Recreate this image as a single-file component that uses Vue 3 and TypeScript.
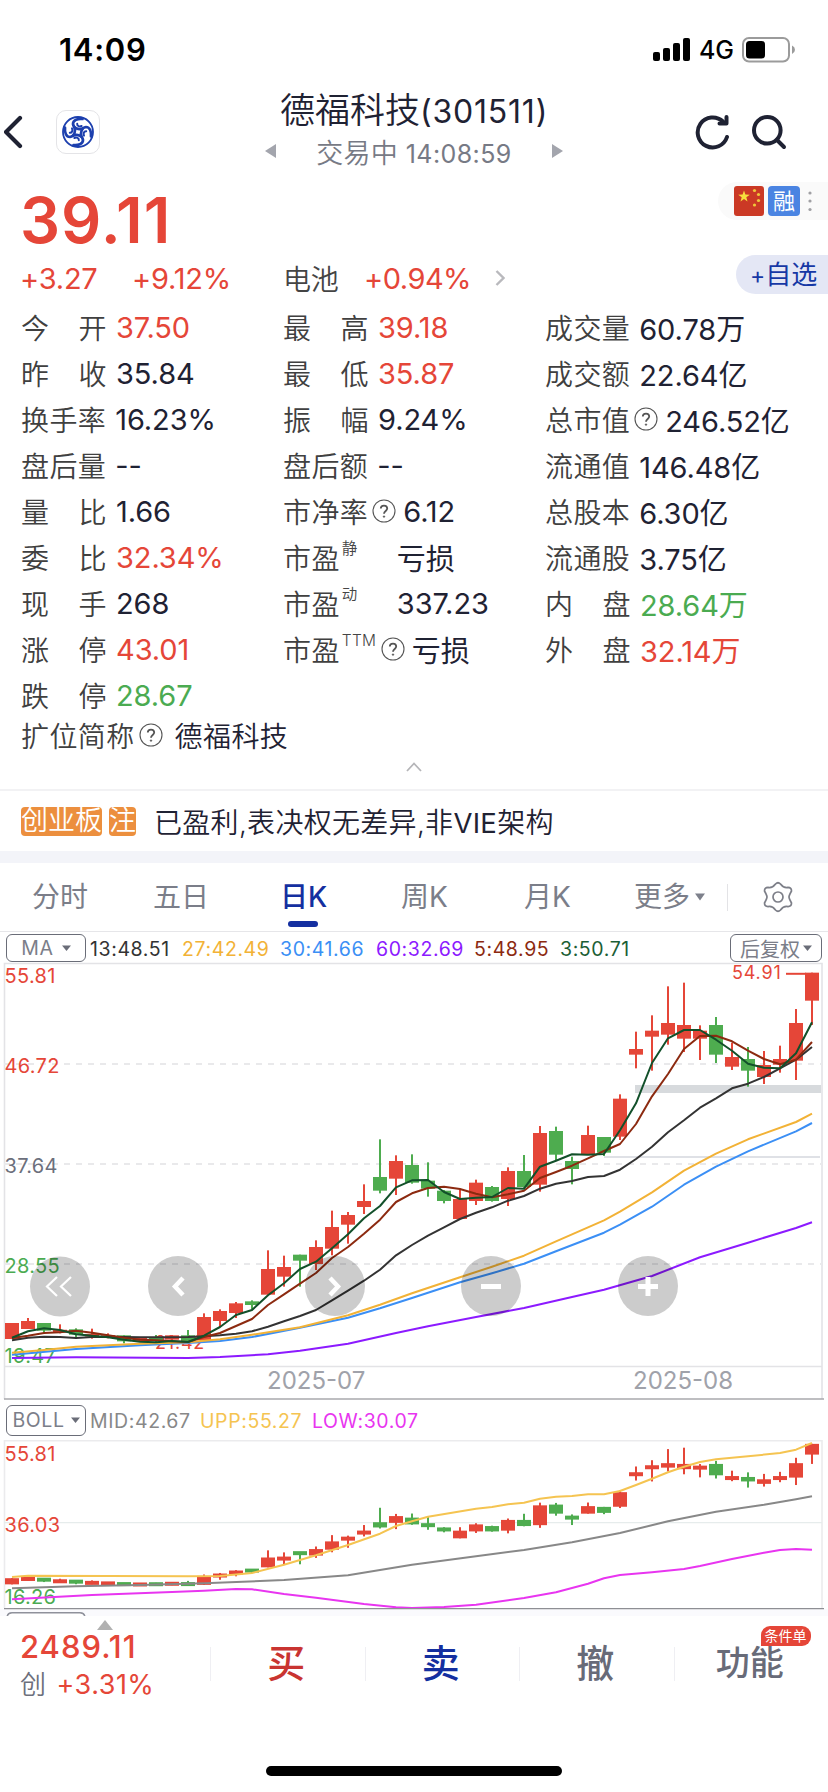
<script setup lang="ts">
interface Stat {
  label: string
  sup?: string
  help?: boolean
  value: string
  tone?: 'up' | 'down'
  pad?: boolean
}
interface Candle {
  x: number
  rise: boolean
  high: number
  top: number
  bottom: number
  low: number
}
type Pt = [number, number]

const columns: Stat[][] = [
  [
    { label: '今开', value: '37.50', tone: 'up' },
    { label: '昨收', value: '35.84' },
    { label: '换手率', value: '16.23%' },
    { label: '盘后量', value: '--' },
    { label: '量比', value: '1.66' },
    { label: '委比', value: '32.34%', tone: 'up' },
    { label: '现手', value: '268' },
    { label: '涨停', value: '43.01', tone: 'up' },
    { label: '跌停', value: '28.67', tone: 'down' },
  ],
  [
    { label: '最高', value: '39.18', tone: 'up' },
    { label: '最低', value: '35.87', tone: 'up' },
    { label: '振幅', value: '9.24%' },
    { label: '盘后额', value: '--' },
    { label: '市净率', help: true, value: '6.12' },
    { label: '市盈', sup: '静', value: '亏损', pad: true },
    { label: '市盈', sup: '动', value: '337.23', pad: true },
    { label: '市盈', sup: 'TTM', help: true, value: '亏损' },
  ],
  [
    { label: '成交量', value: '60.78万' },
    { label: '成交额', value: '22.64亿' },
    { label: '总市值', help: true, value: '246.52亿' },
    { label: '流通值', value: '146.48亿' },
    { label: '总股本', value: '6.30亿' },
    { label: '流通股', value: '3.75亿' },
    { label: '内盘', value: '28.64万', tone: 'down' },
    { label: '外盘', value: '32.14万', tone: 'up' },
  ],
]

const tabs = ['分时', '五日', '日K', '周K', '月K']

// rise flag, high, body top, body bottom, low (third-pixels from the chart origin)
const raw: number[][] = [
  [1, 1089, 1089, 1137, 1137], [1, 1074, 1083, 1107, 1107], [0, 1089, 1089, 1112, 1119],
  [1, 1093, 1110, 1116, 1120], [0, 1105, 1108, 1124, 1136], [1, 1106, 1122, 1129, 1136],
  [1, 1120, 1126, 1133, 1135], [0, 1126, 1126, 1144, 1150], [1, 1132, 1132, 1144, 1144],
  [0, 1125, 1132, 1140, 1148], [1, 1125, 1126, 1139, 1143], [0, 1110, 1126, 1144, 1146],
  [1, 1060, 1071, 1141, 1141], [1, 1048, 1053, 1083, 1101], [1, 1026, 1030, 1059, 1074],
  [0, 1021, 1024, 1035, 1048], [1, 871, 927, 1004, 1004], [1, 887, 921, 950, 980],
  [0, 884, 884, 902, 980], [1, 841, 861, 912, 930], [1, 752, 801, 866, 886],
  [1, 756, 765, 794, 851], [1, 673, 723, 741, 762], [0, 538, 651, 692, 700],
  [1, 586, 603, 656, 705], [0, 583, 615, 668, 671], [0, 607, 662, 686, 710],
  [0, 690, 692, 723, 730], [1, 690, 717, 777, 777], [1, 659, 668, 723, 735],
  [0, 678, 681, 723, 725], [1, 622, 633, 717, 738], [0, 585, 633, 681, 683],
  [1, 498, 519, 674, 695], [0, 500, 513, 584, 600], [0, 590, 603, 627, 673],
  [1, 497, 525, 584, 584], [0, 531, 531, 578, 588], [1, 403, 416, 530, 540],
  [1, 215, 267, 284, 325], [1, 166, 212, 230, 332], [1, 79, 189, 224, 254],
  [1, 68, 195, 236, 276], [1, 196, 212, 236, 300], [0, 171, 195, 284, 309],
  [1, 248, 291, 320, 330], [0, 261, 297, 332, 380], [1, 273, 315, 351, 372],
  [1, 257, 297, 314, 338], [1, 147, 189, 302, 360], [1, 38, 38, 122, 195],
]

const candleX = (i: number): number => 12 + i * 16
const mainY = (v: number): number => v / 3
const subY = (v: number): number => (147 + 0.3835 * v) / 3

function build(scale: (v: number) => number, minBody: number): Candle[] {
  return raw.map(([r, h, t, b, l], i) => {
    let top = scale(t)
    let bottom = scale(b)
    if (bottom - top < minBody) {
      const mid = (top + bottom) / 2
      top = mid - minBody / 2
      bottom = mid + minBody / 2
    }
    return { x: candleX(i), rise: r === 1, high: scale(h), top, bottom, low: scale(l) }
  })
}

const mainCandles = build(mainY, 2.5)
const subCandles = build(subY, 4)

const every = (vals: number[]): Pt[] => vals.map((v, i): Pt => [i, v])
const toPoints = (pts: Pt[]): string => pts.map(([i, v]) => `${candleX(i)},${(v / 3).toFixed(1)}`).join(' ')

const mainLines = [
  {
    color: '#8c1aff',
    points: toPoints([[0, 1194], [4, 1192], [11, 1194], [13, 1191], [16, 1183], [18, 1172], [21, 1151], [24, 1119], [26, 1099], [29, 1071], [32, 1044], [35, 1011], [37, 989], [40, 948], [43, 892], [46, 848], [49, 804], [50, 787]]),
  },
  {
    color: '#3b8ff5',
    points: toPoints([[0, 1184], [4, 1167], [8, 1156], [11, 1149], [13, 1143], [15, 1131], [18, 1103], [21, 1073], [23, 1045], [25, 1014], [28, 967], [30, 940], [32, 911], [34, 874], [37, 818], [38, 794], [40, 740], [42, 674], [44, 620], [46, 574], [49, 514], [50, 489]]),
  },
  {
    color: '#f2b236',
    points: toPoints([[0, 1178], [2, 1170], [4, 1160], [8, 1151], [11, 1147], [13, 1138], [15, 1124], [18, 1102], [21, 1066], [23, 1034], [25, 1000], [28, 952], [30, 920], [32, 887], [34, 844], [37, 781], [38, 755], [40, 697], [42, 632], [44, 581], [46, 538], [49, 486], [50, 461]]),
  },
  {
    color: '#333333',
    points: toPoints(every([1141, 1133, 1130, 1131, 1134, 1131, 1130, 1131, 1132, 1132, 1132, 1131, 1129, 1126, 1121, 1114, 1100, 1084, 1068, 1050, 1021, 992, 962, 929, 886, 855, 827, 802, 777, 758, 742, 722, 708, 686, 671, 663, 651, 648, 629, 597, 560, 517, 481, 443, 415, 385, 371, 351, 325, 299, 261])),
  },
  {
    color: '#8c2a10',
    points: toPoints(every([1134, 1127, 1119, 1117, 1112, 1118, 1126, 1133, 1139, 1141, 1144, 1146, 1131, 1119, 1098, 1077, 1035, 1003, 971, 939, 894, 861, 821, 779, 726, 700, 684, 680, 687, 701, 712, 703, 692, 654, 636, 617, 595, 573, 552, 492, 409, 342, 267, 228, 227, 244, 272, 297, 313, 299, 246])),
  },
  {
    color: '#12502a',
    points: toPoints(every([1133, 1114, 1105, 1110, 1123, 1127, 1132, 1139, 1145, 1147, 1143, 1146, 1127, 1101, 1065, 1050, 1006, 970, 927, 905, 865, 823, 775, 738, 682, 661, 660, 696, 717, 713, 711, 684, 686, 620, 602, 583, 584, 582, 511, 430, 309, 235, 210, 210, 239, 272, 311, 323, 325, 280, 187])),
  },
]

const subLines = [
  {
    color: '#888888',
    points: toPoints([[0, 595], [4, 589], [8, 585], [12, 580], [17, 570], [21, 556], [25, 524], [29, 499], [32, 480], [35, 457], [38, 429], [41, 394], [44, 365], [47, 344], [49, 328], [50, 319]]),
  },
  {
    color: '#f5c451',
    points: toPoints([[0, 561], [1, 557], [11, 559], [13, 558], [15, 549], [17, 524], [19, 496], [21, 465], [23, 431], [24, 408], [25, 394], [26, 380], [29, 356], [30, 351], [31, 343], [32, 338], [33, 326], [34, 320], [35, 318], [36, 313], [37, 313], [38, 303], [39, 285], [40, 266], [41, 247], [42, 230], [43, 216], [44, 208], [46, 199], [48, 189], [49, 179], [50, 159]]),
  },
  {
    color: '#e835f0',
    points: toPoints([[0, 628], [5, 615], [10, 606], [12, 602], [14, 597], [15, 598], [17, 612], [19, 623], [22, 642], [24, 652], [25, 654], [27, 651], [29, 644], [32, 624], [34, 607], [36, 581], [37, 565], [38, 555], [40, 547], [42, 537], [43, 528], [45, 507], [47, 488], [48, 480], [49, 477], [50, 479]]),
  },
]

const stars: Pt[] = [[20.5, 4.5], [24.5, 8.5], [24.5, 14.5], [20.5, 19]]
</script>

<template>
  <div class="page">
    <div class="status">
      <span class="clock">14:09</span>
      <div class="signal">
        <svg width="38" height="24" viewBox="0 0 38 24">
          <rect x="0" y="14" width="7" height="9" rx="2" />
          <rect x="10" y="10" width="7" height="13" rx="2" />
          <rect x="20" y="5" width="7" height="18" rx="2" />
          <rect x="30" y="0" width="7" height="23" rx="2" />
        </svg>
        <span class="net">4G</span>
        <svg width="54" height="26" viewBox="0 0 54 26">
          <rect x="1" y="1" width="46" height="23.5" rx="6" fill="none" stroke="#9b9b9b" stroke-width="2" />
          <rect x="4" y="4" width="19" height="17.5" rx="3.5" />
          <path d="M50 8.5 Q53 10 53 12.7 Q53 15.5 50 17 Z" fill="#9b9b9b" />
        </svg>
      </div>
    </div>

    <header class="header">
      <svg class="back" width="22" height="34" viewBox="0 0 22 34">
        <path d="M16 3 L2 17 L16 31" fill="none" stroke="#1f2233" stroke-width="4.2" stroke-linecap="round" stroke-linejoin="round" />
      </svg>
      <div class="logo">
        <svg width="34" height="34" viewBox="-17 -17 34 34">
          <circle r="15" fill="none" stroke="#1c3fae" stroke-width="1.8" />
          <g v-for="a in [0, 90, 180, 270]" :key="a" :transform="`rotate(${a})`" fill="none" stroke="#1c3fae" stroke-linecap="round">
            <path d="M4.600 -3.600 C1 -2 -4.500 -3.500 -5 -8 C-5 -12 0 -13.500 4.500 -13" stroke-width="2.700" />
            <path d="M3.600 -6 C1.500 -5 -1 -6 -0.800 -8.200" stroke-width="2" />
          </g>
        </svg>
      </div>
      <div class="heading">
        <div class="title">德福科技<span>(301511)</span></div>
        <div class="session">
          <svg width="12" height="14" viewBox="0 0 12 14"><path d="M11 0 V14 L0 7 Z" fill="#a3a5ad" /></svg>
          <span class="session-text">交易中 <em>14:08:59</em></span>
          <svg width="12" height="14" viewBox="0 0 12 14"><path d="M1 0 V14 L12 7 Z" fill="#a3a5ad" /></svg>
        </div>
      </div>
      <div class="tools">
        <svg width="36" height="36" viewBox="0 0 36 36" fill="none" stroke="#1f2233" stroke-width="4" stroke-linecap="round" stroke-linejoin="round">
          <path d="M33 23 A15 15 0 1 1 29 7.5" />
          <path d="M32.5 3 V9.5 H25.5" />
        </svg>
        <svg width="36" height="36" viewBox="0 0 36 36" fill="none" stroke="#1f2233" stroke-width="4" stroke-linecap="round">
          <circle cx="16.3" cy="16.3" r="13.3" />
          <path d="M26 26 L33 33" />
        </svg>
      </div>
    </header>

    <section class="quote">
      <div class="quote-left">
        <div class="price">39.11</div>
        <div class="change">
          <span class="diff">+3.27</span>
          <span class="pct">+9.12%</span>
          <span class="sector">电池</span>
          <span class="sector-pct">+0.94%</span>
          <svg width="10" height="18" viewBox="0 0 10 18"><path d="M1.5 2 L8.5 9 L1.5 16" fill="none" stroke="#b9b9bd" stroke-width="2.400" /></svg>
        </div>
      </div>
      <div class="quote-right">
        <div class="marks">
          <svg width="30" height="30" viewBox="0 0 30 30">
            <rect width="30" height="30" rx="3" fill="#cb3925" />
            <path d="M10 4.5 L11.4 8.6 L15.8 8.7 L12.3 11.3 L13.5 15.6 L10 13 L6.5 15.6 L7.7 11.3 L4.2 8.7 L8.6 8.6 Z" fill="#f7df3c" />
            <circle v-for="(s, i) in stars" :key="i" :cx="s[0]" :cy="s[1]" r="1.6" fill="#f0c83a" />
          </svg>
          <span class="margin-mark">融</span>
          <svg width="4" height="22" viewBox="0 0 4 22" fill="#a0a0a4"><circle cx="2" cy="3" r="1.6" /><circle cx="2" cy="11" r="1.6" /><circle cx="2" cy="19.5" r="1.6" /></svg>
        </div>
        <div class="watch"><span>+</span>自选</div>
      </div>
    </section>

    <section class="stats">
      <div v-for="(col, c) in columns" :key="c" class="col">
        <div v-for="(s, r) in col" :key="r" class="row">
          <span class="label" :class="{ spread: s.label.length === 2 && !s.sup }">
            <span v-for="ch in s.label" :key="ch">{{ ch }}</span>
          </span>
          <sup v-if="s.sup" class="sup">{{ s.sup }}</sup>
          <svg v-if="s.help" class="help" width="24" height="24" viewBox="0 0 24 24" fill="none" stroke="#555">
            <circle cx="12" cy="12" r="11" stroke-width="1.1" />
            <path d="M8.8 9.6 C8.8 5.6 15.2 5.6 15.2 9.6 C15.2 12 12 12 12 14.8" stroke-width="1.8" />
            <circle cx="12" cy="17.6" r="0.7" fill="#555" />
          </svg>
          <span class="value" :class="[s.tone, { padded: s.pad, helped: s.help }]">{{ s.value }}</span>
        </div>
      </div>
    </section>
    <div class="short-name">
      <span class="label">扩位简称</span>
      <svg class="help" width="24" height="24" viewBox="0 0 24 24" fill="none" stroke="#555">
        <circle cx="12" cy="12" r="11" stroke-width="1.1" />
        <path d="M8.8 9.6 C8.8 5.6 15.2 5.6 15.2 9.6 C15.2 12 12 12 12 14.8" stroke-width="1.8" />
        <circle cx="12" cy="17.6" r="0.7" fill="#555" />
      </svg>
      <span class="value name">德福科技</span>
    </div>
    <div class="fold">
      <svg width="16" height="10" viewBox="0 0 16 10"><path d="M1 9 L8 1.5 L15 9" fill="none" stroke="#b5b5b8" stroke-width="1.8" /></svg>
    </div>

    <section class="notice">
      <span class="tag">创业板</span>
      <span class="tag">注</span>
      <span class="notice-text">已盈利,表决权无差异,非<i>VIE</i>架构</span>
    </section>

    <nav class="tabs">
      <span v-for="(t, i) in tabs" :key="t" class="tab" :class="[`tab-${i}`, { active: i === 2 }]">{{ t }}</span>
      <span class="tab more">更多<svg width="10" height="8" viewBox="0 0 10 8"><path d="M0 0.5 H10 L5 7.5 Z" fill="#7d808b" /></svg></span>
      <span class="tab-line"></span>
      <svg class="gear" width="30" height="32" viewBox="-15 -16 30 32" fill="none" stroke="#7d7f88" stroke-width="1.7" stroke-linejoin="round">
        <path d="M-2.5 -13 Q0 -15.500 2.500 -13 Q5.500 -8.800 10 -9.600 Q13.500 -9.500 13.500 -6 Q11 -1.500 11 0 Q11 1.500 13.500 6 Q13.500 9.500 10 9.600 Q5.500 8.800 2.500 13 Q0 15.500 -2.500 13 Q-5.500 8.800 -10 9.600 Q-13.500 9.500 -13.500 6 Q-11 1.500 -11 0 Q-11 -1.500 -13.500 -6 Q-13.500 -9.500 -10 -9.600 Q-5.500 -8.800 -2.500 -13 Z" />
        <circle r="5" />
      </svg>
    </nav>

    <div class="legend">
      <span class="pick ma">MA<svg width="9" height="7" viewBox="0 0 9 7"><path d="M0 0.500 H9 L4.500 6 Z" fill="#6a6d78" /></svg></span>
      <span class="lg l13">13:48.51</span>
      <span class="lg l27">27:42.49</span>
      <span class="lg l30">30:41.66</span>
      <span class="lg l60">60:32.69</span>
      <span class="lg l5">5:48.95</span>
      <span class="lg l3">3:50.71</span>
      <span class="pick adj">后复权<svg width="9" height="7" viewBox="0 0 9 7"><path d="M0 0.500 H9 L4.500 6 Z" fill="#6a6d78" /></svg></span>
    </div>

    <svg class="chart" width="828" height="440" viewBox="0 0 828 440">
      <g fill="none" stroke="#e3e3e6" stroke-width="1.6">
        <path d="M4.500 439 V3.500 H822 V439" />
        <path d="M4 406.500 H822" />
      </g>
      <path d="M4 104 H822 M4 204 H822 M4 304 H822" stroke="#e9e9eb" stroke-width="1.800" stroke-dasharray="6 6" />
      <path d="M4 439 H824" stroke="#a8a8ac" stroke-width="1.400" />
      <rect x="635" y="125" width="186" height="8" fill="#d7dadd" />
      <rect x="604" y="196" width="216" height="2" fill="#dfe1e6" />
      <g class="axis">
        <text x="4.500" y="23" fill="#e54638">55.81</text>
        <text x="4.500" y="113" fill="#e54638">46.72</text>
        <text x="4.500" y="213" fill="#6c6f7c">37.64</text>
        <text x="4.500" y="313" fill="#4bab51">28.55</text>
        <text x="4.500" y="403" fill="#4bab51">19.47</text>
        <text class="mark" x="155" y="389" fill="#e54638">21.42</text>
        <text class="mark" x="732" y="19" fill="#e54638">54.91</text>
      </g>
      <path d="M786 13.800 H806" stroke="#e54638" stroke-width="2" />
      <g v-for="k in mainCandles" :key="k.x" :fill="k.rise ? '#e54638' : '#4eac4f'">
        <rect :x="k.x - 1" :y="k.high" width="2" :height="k.low - k.high" />
        <rect :x="k.x - 7" :y="k.top" width="14" :height="k.bottom - k.top" />
      </g>
      <polyline v-for="l in mainLines" :key="l.color" :points="l.points" fill="none" :stroke="l.color" stroke-width="2" stroke-linejoin="round" />
      <g class="dates">
        <text x="267" y="429">2025-07</text>
        <text x="633" y="429">2025-08</text>
      </g>
      <g fill="#000" fill-opacity="0.2">
        <circle cx="60" cy="326.500" r="30" />
        <circle cx="178" cy="326" r="30" />
        <circle cx="335" cy="326" r="30" />
        <circle cx="491" cy="326" r="30" />
        <circle cx="648" cy="326" r="30" />
      </g>
      <g fill="none" stroke="#fff">
        <path d="M57 317 L47 326.500 L57 336 M71 317 L61 326.500 L71 336" stroke-width="2.200" />
        <path d="M183 318 L175 326.500 L183 335" stroke-width="4.500" />
        <path d="M330 318 L338 326.500 L330 335" stroke-width="4.500" />
        <path d="M481 326.500 H501 M638 326.500 H658 M648 317 V336" stroke-width="5" />
      </g>
    </svg>

    <div class="legend boll-row">
      <span class="pick boll">BOLL<svg width="9" height="7" viewBox="0 0 9 7"><path d="M0 0.500 H9 L4.500 6 Z" fill="#6a6d78" /></svg></span>
      <span class="lg mid">MID:42.67</span>
      <span class="lg upp">UPP:55.27</span>
      <span class="lg low">LOW:30.07</span>
    </div>

    <svg class="subchart" width="828" height="176" viewBox="0 50 828 176">
      <rect x="0" y="219" width="828" height="7" fill="#fafafd" />
      <path d="M4.500 218 V50.800 H822 V218" fill="none" stroke="#ebebed" stroke-width="1.600" />
      <path d="M4 132.700 H822" stroke="#e6ecec" stroke-width="1.200" />
      <g class="axis">
        <text x="4.500" y="70.500" fill="#e54638">55.81</text>
        <text x="4.500" y="142" fill="#e54638">36.03</text>
        <text x="4.500" y="214" fill="#4bab51">16.26</text>
      </g>
      <g v-for="k in subCandles" :key="k.x" :fill="k.rise ? '#e54638' : '#4eac4f'">
        <rect :x="k.x - 1" :y="k.high" width="2" :height="k.low - k.high" />
        <rect :x="k.x - 7" :y="k.top" width="14" :height="k.bottom - k.top" />
      </g>
      <polyline v-for="l in subLines" :key="l.color" :points="l.points" fill="none" :stroke="l.color" stroke-width="2" stroke-linejoin="round" />
      <path d="M4 218.600 H824" stroke="#8e8f94" stroke-width="1.400" />
      <path d="M7 228 Q7 222.800 12 222.800 H80 Q85 222.800 85 228" fill="#fff" stroke="#8f919b" stroke-width="1.400" />
    </svg>

    <footer class="trade">
      <div class="index">
        <svg class="up-mark" width="16" height="10" viewBox="0 0 16 10"><path d="M8 0 L16 10 H0 Z" fill="#b1b1b1" /></svg>
        <div class="index-value">2489.11</div>
        <div class="index-change"><span>创</span>+3.31%</div>
      </div>
      <div class="act buy">买</div>
      <div class="act sell">卖</div>
      <div class="act cancel">撤</div>
      <div class="act func">功能<span class="badge">条件单</span></div>
    </footer>
    <div class="home"></div>
  </div>
</template>

<style>
body {
  background: #fff;
}
</style>

<style scoped>
.page {
  width: 828px;
  height: 1792px;
  overflow: hidden;
  background: #fff;
  color: #1f2233;
  font-family: Inter, "Noto Sans CJK SC", sans-serif;
  font-weight: 400;
  white-space: nowrap;
}
.page * {
  box-sizing: border-box;
}
.page svg {
  flex: none;
}
.status {
  height: 92px;
  padding: 8px 32px 0 59px;
  display: flex;
  align-items: center;
  justify-content: space-between;
  color: #000;
}
.clock {
  font-size: 31px;
  font-weight: 600;
  line-height: 40px;
  letter-spacing: 0.7px;
}
.signal {
  display: flex;
  align-items: center;
  gap: 8px;
}
.net {
  font-size: 25px;
  font-weight: 500;
  line-height: 28px;
}
.header {
  height: 88px;
  display: flex;
  align-items: flex-start;
}
.back {
  margin: 23px 0 0 4px;
}
.logo {
  margin: 18px 0 0 30px;
  width: 44px;
  height: 44px;
  border: 1px solid #e4e4e7;
  border-radius: 10px;
  display: flex;
  align-items: center;
  justify-content: center;
}
.heading {
  width: 300px;
  margin-left: 164px;
  display: flex;
  flex-direction: column;
  align-items: center;
}
.title {
  height: 39px;
  line-height: 36px;
  font-size: 35px;
  font-weight: 350;
}
.title span {
  font-size: 32px;
  font-weight: 400;
  letter-spacing: 0.8px;
}
.session {
  display: flex;
  align-items: center;
  gap: 39px;
  height: 40px;
  color: #777a85;
}
.session-text {
  font-size: 27px;
  font-weight: 350;
  letter-spacing: 0.2px;
}
.session em {
  font-style: normal;
  font-weight: 400;
  font-size: 25px;
  letter-spacing: 0.4px;
}
.tools {
  margin: 22px 0 0 130px;
  display: flex;
  gap: 21px;
}
.quote {
  height: 124px;
  display: flex;
  justify-content: space-between;
  color: #e54638;
}
.quote-left {
  padding-left: 20px;
}
.price {
  height: 75px;
  line-height: 80px;
  font-size: 63px;
  font-weight: 600;
  letter-spacing: 1px;
}
.change {
  height: 46px;
  display: flex;
  align-items: center;
  font-size: 29px;
  letter-spacing: -0.2px;
}
.diff {
  width: 112px;
}
.pct {
  width: 151px;
}
.sector {
  width: 81px;
  color: #444;
  font-size: 28px;
  font-weight: 350;
}
.sector-pct {
  width: 131px;
  letter-spacing: -0.5px;
}
.quote-right {
  display: flex;
  flex-direction: column;
  align-items: flex-end;
  padding-top: 2px;
}
.marks {
  width: 110px;
  height: 38px;
  padding-left: 16px;
  border-radius: 19px 0 0 19px;
  background: #fafafa;
  display: flex;
  align-items: center;
}
.margin-mark {
  width: 32px;
  height: 30px;
  margin: 0 8px 0 4px;
  border-radius: 4px;
  background: #4a84e2;
  color: #fff;
  font-size: 22px;
  line-height: 30px;
  text-align: center;
}
.watch {
  width: 92px;
  height: 39px;
  margin-top: 35px;
  padding-left: 14px;
  border-radius: 20px 0 0 20px;
  background: #e4e7f5;
  color: #1638a5;
  font-size: 26px;
  line-height: 40px;
}
.watch span {
  font-size: 23px;
}
.stats {
  height: 414px;
  padding-left: 21px;
  display: grid;
  grid-template-columns: 262px 262px 1fr;
}
.row {
  height: 46px;
  display: flex;
  align-items: center;
}
.label {
  color: #404040;
  font-size: 28px;
  font-weight: 350;
  letter-spacing: 0.4px;
}
.spread {
  width: 86px;
  display: flex;
  justify-content: space-between;
}
.sup {
  align-self: flex-start;
  margin-left: 2px;
  width: 16px;
  color: #454545;
  font-size: 15.5px;
  font-weight: 350;
  line-height: 30px;
  letter-spacing: 0.3px;
  vertical-align: baseline;
}
.help {
  margin-left: 4px;
}
.sup + .help {
  margin-left: 23px;
}
.value {
  margin-left: 9px;
  font-size: 29px;
  letter-spacing: -0.1px;
  font-weight: 400;
}
.value.padded {
  margin-left: 39px;
}
.value.helped {
  margin-left: 7px;
}
.up {
  color: #e54638;
}
.down {
  color: #4bab51;
}
.short-name {
  height: 33px;
  padding-left: 21px;
  display: flex;
  align-items: center;
}
.value.name {
  margin-left: 12px;
  font-size: 28px;
  font-weight: 350;
  letter-spacing: 0.4px;
}
.fold {
  height: 38px;
  padding-top: 11px;
  display: flex;
  justify-content: center;
}
.notice {
  height: 62px;
  padding-left: 21px;
  border-top: 2px solid #f2f2f4;
  display: flex;
  align-items: center;
}
.tag {
  height: 29px;
  margin-right: 7px;
  border-radius: 4px;
  background: #ec8f3e;
  color: #fff;
  font-size: 27px;
  font-weight: 350;
  line-height: 28px;
}
.notice-text {
  margin-left: 11px;
  font-size: 28px;
  font-weight: 350;
  letter-spacing: 0.3px;
}
.notice-text i {
  font-style: normal;
  font-weight: 400;
  font-size: 27.5px;
}
.tabs {
  height: 81px;
  border-top: 12px solid #f3f4f9;
  border-bottom: 1px solid #e6e6e9;
  display: flex;
  align-items: center;
  color: #7b7e89;
  font-size: 28px;
}
.tab {
  height: 68px;
  line-height: 68px;
  font-weight: 400;
}
.tab-0 {
  margin-left: 32px;
  width: 121px;
}
.tab-1 {
  width: 127px;
}
.tab-2 {
  width: 121px;
}
.tab-3 {
  width: 123px;
}
.tab-4 {
  width: 110px;
}
.active {
  position: relative;
  color: #142fa0;
  font-weight: 500;
}
.active::after {
  content: "";
  position: absolute;
  left: 8px;
  bottom: 4px;
  width: 30px;
  height: 6px;
  border-radius: 3px;
  background: #142fa0;
}
.more {
  width: 93px;
  display: flex;
  align-items: center;
  gap: 5px;
}
.tab-line {
  width: 1px;
  height: 27px;
  background: #e3e3e6;
}
.gear {
  margin-left: 35px;
}
.legend {
  height: 28px;
  padding-left: 6px;
  margin-top: 2px;
  display: flex;
  align-items: center;
  font-size: 19.5px;
  letter-spacing: 0.6px;
}
.pick {
  display: flex;
  align-items: center;
  justify-content: center;
  gap: 8px;
  height: 28px;
  border: 1.5px solid #6a6d78;
  border-radius: 6px;
  color: #7b7e89;
  background: #fff;
}
.ma {
  width: 80px;
}
.lg {
  position: relative;
  top: 1px;
}
.l13 {
  margin-left: 4px;
  width: 92px;
  color: #333;
}
.l27 {
  width: 98px;
  color: #f2b236;
}
.l30 {
  width: 96px;
  color: #3b8ff5;
}
.l60 {
  width: 98px;
  color: #8c1aff;
}
.l5 {
  width: 86px;
  color: #8c2a10;
}
.l3 {
  width: 170px;
  color: #1c5e35;
}
.adj {
  width: 92px;
  font-size: 20px;
  letter-spacing: 0;
  gap: 3px;
}
.chart {
  display: block;
  margin-top: -2px;
}
.axis {
  font-size: 20px;
  letter-spacing: 0.3px;
}
.mark {
  font-size: 18px;
  letter-spacing: 0.8px;
}
.dates {
  font-size: 24px;
  fill: #a0a2aa;
}
.boll-row {
  height: 40px;
  margin-top: 0;
}
.boll {
  width: 80px;
  height: 31px;
  font-size: 19.5px;
  gap: 6px;
}
.mid {
  margin-left: 4px;
  width: 110px;
  color: #888;
}
.upp {
  width: 112px;
  color: #f5c451;
}
.low {
  color: #e835f0;
}
.subchart {
  display: block;
}
.trade {
  height: 150px;
  display: flex;
}
.index {
  position: relative;
  width: 210px;
  padding: 7px 0 0 20px;
}
.up-mark {
  position: absolute;
  left: 97px;
  top: 4px;
}
.index-value {
  height: 40px;
  color: #e54638;
  font-size: 31px;
  font-weight: 500;
  line-height: 47px;
  letter-spacing: 1px;
}
.index-change {
  height: 40px;
  color: #e54638;
  font-size: 27px;
  line-height: 44px;
  letter-spacing: 0.5px;
}
.index-change span {
  margin-right: 10px;
  color: #6c6f7c;
  font-size: 26px;
  font-weight: 350;
}
.act {
  position: relative;
  width: 154.500px;
  height: 34px;
  margin-top: 31px;
  padding-right: 3px;
  border-left: 1px solid #efeff3;
  font-size: 38px;
  font-weight: 500;
  line-height: 32px;
  text-align: center;
}
.buy {
  color: #c93431;
}
.sell {
  color: #142fa0;
}
.cancel {
  color: #686b78;
}
.func {
  color: #686b78;
  font-size: 34px;
}
.badge {
  position: absolute;
  left: 86px;
  top: -21px;
  width: 50px;
  height: 20px;
  border-radius: 9px 9px 9px 0;
  background: #e54638;
  color: #fff;
  font-size: 14px;
  font-weight: 400;
  line-height: 20px;
}
.home {
  width: 296px;
  height: 10px;
  margin: 0 auto;
  border-radius: 5px;
  background: #000;
}
</style>
